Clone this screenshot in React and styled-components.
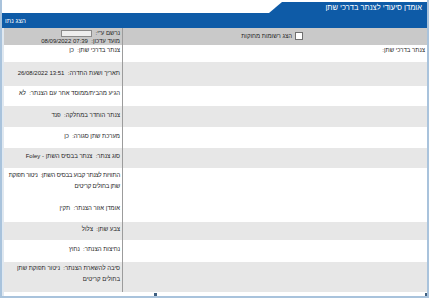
import React from 'react';
import styled, { createGlobalStyle } from 'styled-components';

const GlobalStyle = createGlobalStyle`
  html, body {
    margin: 0;
    padding: 0;
    background: #ffffff;
  }
  body {
    font-family: "Liberation Sans", Arial, sans-serif;
  }
`;

const Frame = styled.div`
  position: relative;
  width: 429px;
  height: 298px;
  box-sizing: border-box;
  border: 2px solid #a9c3dc;
  border-top: none;
  display: flex;
  flex-direction: column;
  overflow: hidden;
  background: #ffffff;
`;

const TopStrip = styled.div`
  height: 13px;
  display: flex;
  justify-content: flex-end;
  align-items: flex-end;
  background: #ffffff;
`;

const TitleTab = styled.div`
  width: 158px;
  height: 11px;
  background: #0e5ba7;
  clip-path: polygon(13px 0, 100% 0, 100% 100%, 0 100%);
  color: #ffffff;
  font-size: 7.5px;
  direction: rtl;
  padding-right: 5px;
  box-sizing: border-box;
  line-height: 12px;
`;

const BlueBar = styled.div`
  height: 15px;
  background: #0e5ba7;
  color: #ffffff;
  font-size: 6.5px;
  line-height: 15px;
  padding-left: 3px;
  direction: ltr;
`;

const Body = styled.div`
  flex: 1;
  display: flex;
  flex-direction: column;
  border-left: 2px solid #e0e8f0;
`;

const Row = styled.div`
  display: flex;
  height: ${(p) => p.h}px;
  background: ${(p) => (p.shade === 'head' ? '#c9c9c9' : p.shade === 'gray' ? '#e7e7e7' : '#ffffff')};
`;

const SideCell = styled.div`
  width: 119px;
  flex-shrink: 0;
  box-sizing: border-box;
  border-right: 1px solid #9c9c9c;
  direction: rtl;
  text-align: right;
  padding: ${(p) => p.pt || 0}px 2px 0 0;
  font-size: 6px;
  letter-spacing: ${(p) => (p.tight ? '-0.2px' : '0')};
  line-height: 11px;
  color: #222222;
  white-space: pre-wrap;
`;

const MainCell = styled.div`
  flex: 1;
  direction: rtl;
  text-align: right;
  padding: ${(p) => p.pt || 0}px 2px 0 2px;
  font-size: 6px;
  line-height: 11px;
  color: #222222;
`;

const HeadLine = styled.div`
  display: flex;
  direction: rtl;
  align-items: center;
  gap: 3px;
  height: 8px;
  line-height: 8px;
  white-space: pre;
`;

const SmallInput = styled.div`
  width: 29px;
  height: 5px;
  border: 1px solid #8a8a8a;
  background: #eeeeee;
`;

const CheckRow = styled.div`
  display: flex;
  direction: rtl;
  align-items: center;
  gap: 3px;
  padding-right: 122px;
  height: 16px;
`;

const CheckBox = styled.div`
  width: 6px;
  height: 6px;
  border: 1px solid #6f6f6f;
  background: #ffffff;
`;

const Handle = styled.div`
  position: absolute;
  width: 3px;
  height: 3px;
  background: #3f5f80;
  left: ${(p) => p.x}px;
  top: ${(p) => p.y}px;
`;

// time first so that the RTL line shows the date on the left, as in the form
const rows = [
  { h: 17, shade: 'white', pt: 0, text: 'צנתר בדרכי שתן:  כן', main: 'צנתר בדרכי שתן:' },
  { h: 24, shade: 'gray', pt: 6, text: 'תאריך ושעת החדרה:  13:51 26/08/2022' },
  { h: 20, shade: 'white', pt: 2, text: 'הגיע מהבית/ממוסד אחר עם הצנתר:  לא' },
  { h: 21, shade: 'gray', pt: 4, text: 'צנתר הוחדר במחלקה:  פנד' },
  { h: 21, shade: 'white', pt: 4, text: 'מערכת שתן סגורה:  כן' },
  { h: 20, shade: 'gray', pt: 3, text: 'סוג צנתר:  צנתר בבסיס השתן - Foley' },
  { h: 30, shade: 'white', pt: 2, tight: true, text: 'התוויות לצנתר קבוע בבסיס השתן:  ניטור תפוקת שתן בחולים קריטים' },
  { h: 24, shade: 'white', pt: 5, text: 'אומדן אזור הצנתר:  תקין' },
  { h: 18, shade: 'gray', pt: 2, text: 'צבע שתן:  צלול' },
  { h: 22, shade: 'white', pt: 4, text: 'נחיצות הצנתר:  נחוץ' },
  { h: 30, shade: 'gray', pt: 1, text: 'סיבה להשארת הצנתר:  ניטור תפוקת שתן בחולים קריטים' },
];

export default function App() {
  return (
    <>
      <GlobalStyle />
      <Frame>
        <TopStrip>
          <TitleTab>אומדן סיעודי לצנתר בדרכי שתן</TitleTab>
        </TopStrip>
        <BlueBar>הצג נתו</BlueBar>
        <Body>
          <Row h={17} shade="head">
            <SideCell pt={1}>
              <HeadLine>
                <span>נרשם ע"י:</span>
                <SmallInput />
              </HeadLine>
              <HeadLine>מועד עדכון:  07:39 08/09/2022</HeadLine>
            </SideCell>
            <MainCell>
              <CheckRow>
                <CheckBox />
                <span>הצג רשומות מחוקות</span>
              </CheckRow>
            </MainCell>
          </Row>
          {rows.map((r, i) => (
            <Row key={i} h={r.h} shade={r.shade}>
              <SideCell pt={r.pt} tight={r.tight}>{r.text}</SideCell>
              <MainCell pt={r.pt}>{r.main || ''}</MainCell>
            </Row>
          ))}
        </Body>
        <Handle x={152} y={293} />
        <Handle x={423} y={293} />
      </Frame>
    </>
  );
}
